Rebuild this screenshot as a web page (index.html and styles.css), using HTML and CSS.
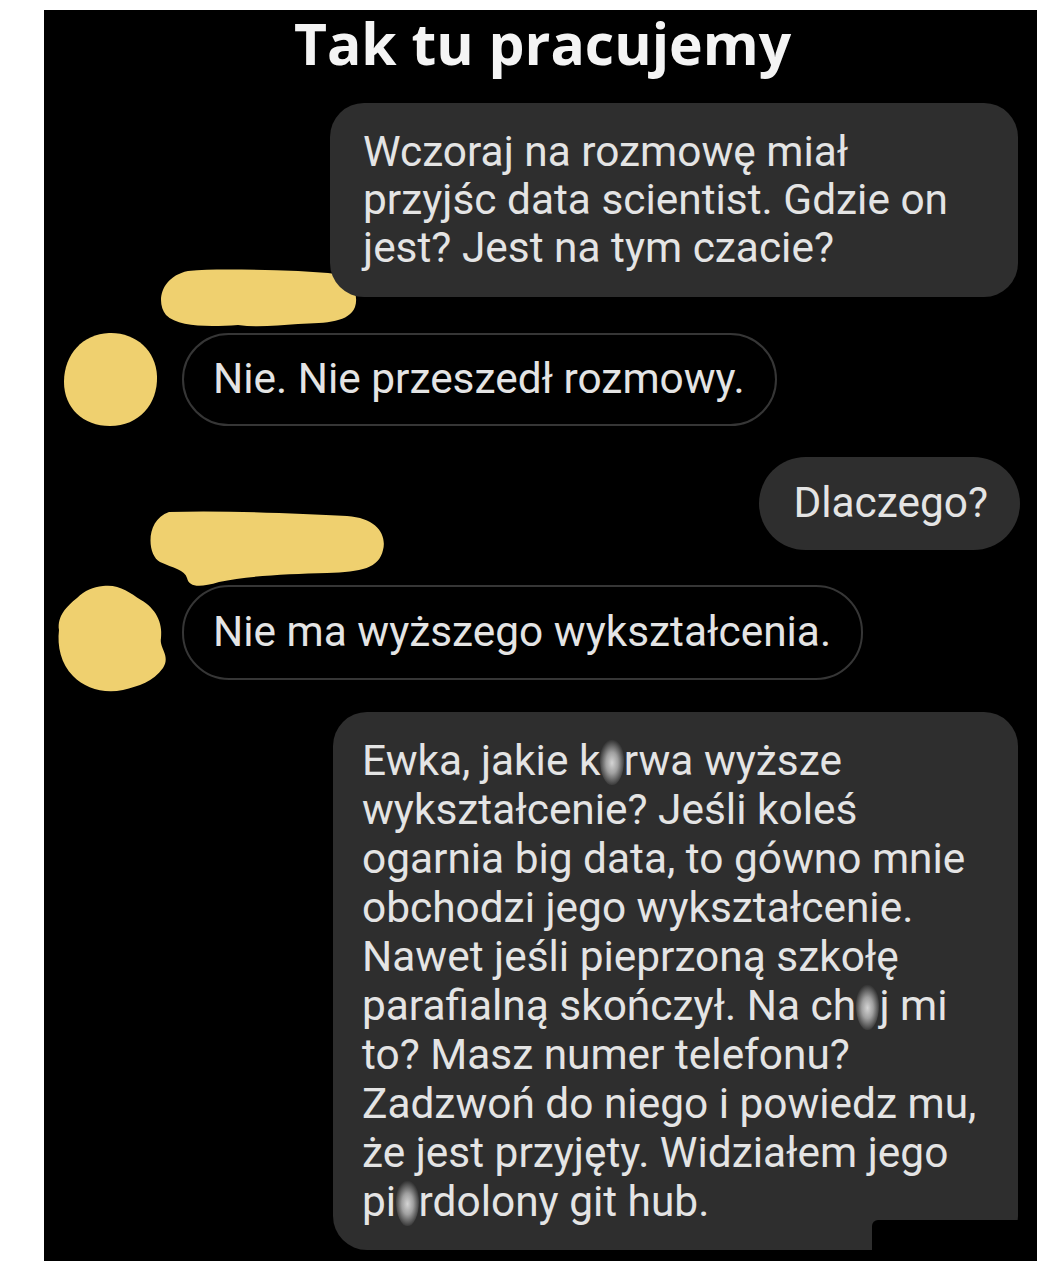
FILE: index.html
```html
<!DOCTYPE html>
<html lang="pl">
<head>
<meta charset="utf-8">
<title>Tak tu pracujemy</title>
<link rel="stylesheet" href="styles.css">
</head>
<body>
<div class="frame">
  <h1 class="title">Tak tu pracujemy</h1>
  <div class="thread">
    <div class="msg out">
      <div class="bubble filled wide">Wczoraj na rozmowę miał<br>przyjśc data scientist. Gdzie on<br>jest? Jest na tym czacie?</div>
    </div>

    <div class="msg in first">
      <svg class="name-mark nm1" width="200" height="60" viewBox="0 0 200 60"><path d="M30 3 C60 0 100 2 140 3 L170 5 C195 7 201 27 197 39 C191 54 170 55 140 56 C120 57 100 60 80 57 C50 59 20 59 8 47 C-2 35 2 9 30 3 Z"/></svg>
      <div class="row">
        <svg class="avatar" width="94" height="94" viewBox="0 0 94 94"><path d="M46 1 C72 0 93 18 94 44 C95 72 76 94 47 94 C20 94 1 76 1 50 C1 22 20 2 46 1 Z"/></svg>
        <div class="bubble outline">Nie. Nie przeszedł rozmowy.</div>
      </div>
    </div>

    <div class="msg out gap">
      <div class="bubble filled pill">Dlaczego?</div>
    </div>

    <div class="msg in second">
      <svg class="name-mark nm2" width="240" height="80" viewBox="0 0 240 80"><path d="M22 2 C80 0 150 4 200 6 C230 8 240 25 236 40 C232 58 215 62 180 63 C140 64 100 66 72 72 C52 78 42 77 40 68 C38 60 26 58 13 52 C0 45 -2 10 22 2 Z"/></svg>
      <div class="row">
        <svg class="avatar" width="94" height="94" viewBox="0 0 94 94"><path d="M40 0 C56 -2 66 6 78 14 C92 22 100 36 98 52 C96 62 108 70 100 82 C90 96 76 100 60 104 C40 108 22 102 10 90 C-2 78 -6 60 -4 44 C-6 30 4 20 14 12 C22 4 30 1 40 0 Z"/></svg>
        <div class="bubble outline">Nie ma wyższego wykształcenia.</div>
      </div>
    </div>

    <div class="msg out gap last">
      <div class="bubble filled wide long">Ewka, jakie k<span class="cens">u</span>rwa wyższe<br>wykształcenie? Jeśli koleś<br>ogarnia big data, to gówno mnie<br>obchodzi jego wykształcenie.<br>Nawet jeśli pieprzoną szkołę<br>parafialną skończył. Na ch<span class="cens">u</span>j mi<br>to? Masz numer telefonu?<br>Zadzwoń do niego i powiedz mu,<br>że jest przyjęty. Widziałem jego<br>pi<span class="cens">e</span>rdolony git hub.<span class="redact"></span></div>
    </div>
  </div>
</div>
</body>
</html>
```
FILE: styles.css
```css
html, body {
  margin: 0;
  padding: 0;
  background: #ffffff;
}

.frame {
  margin: 10px 0 0 44px;
  width: 993px;
  height: 1251px;
  background: #000000;
  box-sizing: border-box;
  padding-top: 1px;
}

.title {
  margin: 0;
  text-align: center;
  font-family: "Open Sans", "Noto Sans", sans-serif;
  font-weight: 700;
  font-size: 57px;
  line-height: 64px;
  color: #f4f4f4;
  padding-left: 4px;
}

.thread {
  display: flex;
  flex-direction: column;
  padding: 28px 19px 0 14px;
  font-family: Roboto, "Liberation Sans", sans-serif;
  font-size: 42.4px;
  line-height: 48px;
  color: #e4e4e4;
}

.msg {
  display: flex;
  flex-direction: column;
}

.msg.out {
  align-items: flex-end;
}

.msg.out.gap {
  margin-top: 31px;
}

.msg.out.last {
  margin-top: 32px;
}

.bubble {
  box-sizing: border-box;
  white-space: nowrap;
  position: relative;
}

.bubble.filled {
  background: #2e2e2e;
}

.bubble.wide {
  width: 688px;
  padding: 25px 30px 25px 33px;
  border-radius: 34px;
}

.bubble.long {
  width: 685px;
  line-height: 49px;
  padding: 24px 30px 24px 29px;
}

.bubble.pill {
  margin-right: -2px;
  padding: 22px 32px 23px 34px;
  border-radius: 47px;
}

.bubble.outline {
  border: 2px solid #363636;
  border-radius: 47px;
  padding: 20px 30px 21px 29px;
}

.msg.in {
  align-items: flex-start;
}

.msg.in.first {
  margin-top: -29px;
}

.msg.in.second {
  margin-top: -40px;
}

.name-mark {
  display: block;
  fill: #efd06f;
}

.nm1 {
  margin-left: 100px;
}

.nm2 {
  margin-left: 89px;
}

.row {
  display: flex;
  align-items: center;
  gap: 25px;
  margin-top: 4px;
  margin-left: 5px;
}

.msg.in.second .row {
  margin-top: -5px;
}

.msg.in.second .bubble.outline {
  padding-top: 21px;
  padding-bottom: 22px;
}

.avatar {
  display: block;
  flex: none;
  fill: #efd06f;
  overflow: visible;
}

.cens {
  color: transparent;
  background: radial-gradient(ellipse 55% 48% at 50% 55%, #d4d4d4 0%, #a0a0a0 45%, rgba(90,90,90,0) 100%);
  border-radius: 50%;
}

.redact {
  position: absolute;
  right: -19px;
  bottom: -11px;
  width: 165px;
  height: 41px;
  background: #000000;
  border-radius: 6px 0 0 0;
}
```
